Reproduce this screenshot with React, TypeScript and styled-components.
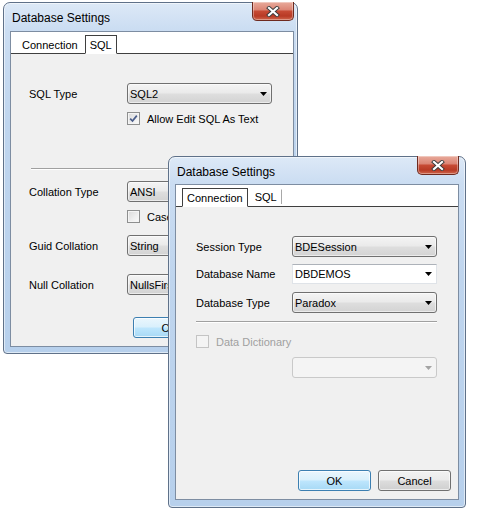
import React from "react";
import styled, { createGlobalStyle } from "styled-components";

const Global = createGlobalStyle`
  html, body { margin: 0; padding: 0; background: #ffffff; }
  body {
    font-family: "Liberation Sans", Arial, sans-serif;
    font-size: 11px;
    color: #000;
  }
`;

const Desktop = styled.div`
  position: relative;
  width: 479px;
  height: 527px;
  overflow: hidden;
  background: #ffffff;
`;

const WindowFrame = styled.div<{
  $x: number;
  $y: number;
  $w: number;
  $h: number;
  $pr: number;
  $pb: number;
}>`
  position: absolute;
  left: ${(p) => p.$x}px;
  top: ${(p) => p.$y}px;
  width: ${(p) => p.$w}px;
  height: ${(p) => p.$h}px;
  box-sizing: border-box;
  border: 1px solid #5f7189;
  border-radius: 7px 7px 4px 4px;
  background: linear-gradient(
    180deg,
    #dde9f7 0px,
    #cbddf2 26px,
    #bfd5ee 120px,
    #b7d0ec 100%
  );
  box-shadow: inset 0 0 0 1px rgba(255, 255, 255, 0.55);
  display: flex;
  flex-direction: column;
  padding: 0 ${(p) => p.$pr}px ${(p) => p.$pb}px 6px;
`;

const TitleBar = styled.div<{ $h: number }>`
  height: ${(p) => p.$h}px;
  flex: none;
  display: flex;
  align-items: flex-start;
  justify-content: space-between;
`;

const TitleText = styled.span`
  margin-top: 8px;
  padding-left: 2px;
  font-size: 12px;
  line-height: 14px;
  color: #000;
`;

const CloseButton = styled.div`
  margin-top: -1px;
  width: 42px;
  height: 19px;
  box-sizing: border-box;
  border: 1px solid #6e2a1f;
  border-top: none;
  border-radius: 0 0 5px 5px;
  background: linear-gradient(
    180deg,
    #e9ab9c 0%,
    #dc8676 42%,
    #c64a34 52%,
    #b83a25 78%,
    #d0674d 100%
  );
  box-shadow: inset 0 0 0 1px rgba(255, 255, 255, 0.35);
  display: flex;
  align-items: center;
  justify-content: center;
`;

const Client = styled.div`
  flex: 1;
  min-height: 0;
  border: 1px solid #7d8da2;
  background: #f0f0f0;
  display: flex;
  flex-direction: column;
`;

const TabStrip = styled.div`
  height: 21px;
  flex: none;
  background: #ffffff;
  border-bottom: 1px solid #3f3f3f;
  display: flex;
  align-items: flex-end;
  gap: 2px;
  padding-left: 6px;
`;

const Tab = styled.div<{ $active?: boolean; $sep?: boolean }>`
  height: ${(p) => (p.$active ? 19 : 18)}px;
  margin-bottom: ${(p) => (p.$active ? -1 : 0)}px;
  box-sizing: border-box;
  padding: 2px 4px 0 4px;
  line-height: 15px;
  border: 1px solid ${(p) => (p.$active ? "#3f3f3f" : "transparent")};
  border-bottom: ${(p) => (p.$active ? "1px solid #ffffff" : "none")};
  border-right-color: ${(p) =>
    p.$active ? "#3f3f3f" : p.$sep ? "#a8a8a8" : "transparent"};
  background: #ffffff;
  ${(p) =>
    p.$sep
      ? "height: 15px; margin-bottom: 2px; padding-top: 0; line-height: 14px;"
      : ""}
`;

const Body = styled.div<{ $pl: number }>`
  flex: 1;
  display: flex;
  flex-direction: column;
  padding: 0 7px 8px ${(p) => p.$pl}px;
`;

const Row = styled.div<{ $mt: number }>`
  display: flex;
  align-items: center;
  margin-top: ${(p) => p.$mt}px;
`;

const Label = styled.span<{ $w: number }>`
  width: ${(p) => p.$w}px;
  flex: none;
  white-space: nowrap;
`;

const Indent = styled.span<{ $w: number }>`
  width: ${(p) => p.$w}px;
  flex: none;
`;

const Combo = styled.div<{ $disabled?: boolean }>`
  width: 145px;
  height: 21px;
  flex: none;
  box-sizing: border-box;
  border: 1px solid ${(p) => (p.$disabled ? "#c9c9c9" : "#707070")};
  border-radius: 3px;
  background: ${(p) =>
    p.$disabled
      ? "#f4f4f4"
      : "linear-gradient(180deg, #f4f4f4 0%, #eaeaea 48%, #dedede 52%, #d3d3d3 100%)"};
  box-shadow: ${(p) =>
    p.$disabled ? "none" : "inset 0 0 0 1px rgba(255,255,255,0.55)"};
  display: flex;
  align-items: center;
  justify-content: space-between;
  padding: 0 4px 0 2px;
  white-space: nowrap;
  overflow: hidden;
`;

const EditCombo = styled.div`
  width: 145px;
  height: 20px;
  flex: none;
  box-sizing: border-box;
  border: 1px solid #dfe3e8;
  border-top-color: #adb2b9;
  background: #ffffff;
  display: flex;
  align-items: center;
  justify-content: space-between;
  padding: 0 4px 0 2px;
`;

const ComboText = styled.span`
  overflow: hidden;
  white-space: nowrap;
`;

const Arrow = ({ color = "#000" }: { color?: string }) => (
  <svg width="7" height="4" viewBox="0 0 7 4">
    <polygon points="0,0 7,0 3.5,4" fill={color} />
  </svg>
);

const CheckBox = styled.div<{ $disabled?: boolean }>`
  width: 13px;
  height: 13px;
  flex: none;
  box-sizing: border-box;
  border: 1px solid ${(p) => (p.$disabled ? "#c4c4c4" : "#8e8f8f")};
  background: ${(p) =>
    p.$disabled
      ? "#f4f4f4"
      : "linear-gradient(135deg, #d9d9d9 0%, #ededed 55%, #fbfbfb 100%)"};
  box-shadow: inset 0 0 0 1px #f4f4f4;
  display: flex;
  align-items: center;
  justify-content: center;
`;

const CheckLabel = styled.span<{ $disabled?: boolean }>`
  margin-left: 7px;
  white-space: nowrap;
  color: ${(p) => (p.$disabled ? "#a0a0a0" : "#000")};
`;

const Separator = styled.div<{ $w: number; $mt: number; $ml?: number }>`
  width: ${(p) => p.$w}px;
  height: 0;
  margin-top: ${(p) => p.$mt}px;
  margin-left: ${(p) => p.$ml ?? 0}px;
  border-top: 1px solid #a0a0a0;
  border-bottom: 1px solid #ffffff;
`;

const ButtonRow = styled.div`
  margin-top: auto;
  display: flex;
  justify-content: flex-end;
  gap: 7px;
`;

const Button = styled.div<{ $default?: boolean }>`
  width: 73px;
  height: 21px;
  box-sizing: border-box;
  border: 1px solid ${(p) => (p.$default ? "#3c7fb1" : "#707070")};
  border-radius: 3px;
  background: ${(p) =>
    p.$default
      ? "linear-gradient(180deg, #eaf6fd 0%, #d9f0fc 48%, #bee6fd 52%, #a7d9f5 100%)"
      : "linear-gradient(180deg, #f2f2f2 0%, #ebebeb 48%, #dddddd 52%, #cfcfcf 100%)"};
  box-shadow: inset 0 0 0 1px
    ${(p) => (p.$default ? "rgba(255,255,255,0.7)" : "rgba(255,255,255,0.6)")};
  display: flex;
  align-items: center;
  justify-content: center;
`;

const CloseX = () => (
  <svg width="14" height="11" viewBox="0 0 14 11">
    <path
      d="M3 2 L11 9 M11 2 L3 9"
      stroke="#3b3b3b"
      strokeWidth="4"
      strokeLinecap="square"
      fill="none"
    />
    <path
      d="M3 2 L11 9 M11 2 L3 9"
      stroke="#ffffff"
      strokeWidth="2.2"
      strokeLinecap="square"
      fill="none"
    />
  </svg>
);

const CheckMark = () => (
  <svg width="9" height="9" viewBox="0 0 9 9">
    <path
      d="M1.2 4.6 L3.5 7 L7.8 1.6"
      stroke="#4a5d8a"
      strokeWidth="1.7"
      fill="none"
    />
  </svg>
);

function Window(props: {
  x: number;
  y: number;
  w: number;
  h: number;
  pr: number;
  pb: number;
  th: number;
  children: React.ReactNode;
}) {
  return (
    <WindowFrame
      $x={props.x}
      $y={props.y}
      $w={props.w}
      $h={props.h}
      $pr={props.pr}
      $pb={props.pb}
    >
      <TitleBar $h={props.th}>
        <TitleText>Database Settings</TitleText>
        <CloseButton>
          <CloseX />
        </CloseButton>
      </TitleBar>
      <Client>{props.children}</Client>
    </WindowFrame>
  );
}

export default function App() {
  return (
    <>
      <Global />
      <Desktop>
        <Window x={3} y={2} w={295} h={352} pr={3} pb={6} th={28}>
          <TabStrip>
            <Tab>Connection</Tab>
            <Tab $active>SQL</Tab>
          </TabStrip>
          <Body $pl={18}>
            <Row $mt={29}>
              <Label $w={98}>SQL Type</Label>
              <Combo>
                <ComboText>SQL2</ComboText>
                <Arrow />
              </Combo>
            </Row>
            <Row $mt={8}>
              <Indent $w={98} />
              <CheckBox>
                <CheckMark />
              </CheckBox>
              <CheckLabel>Allow Edit SQL As Text</CheckLabel>
            </Row>
            <Separator $w={241} $mt={43} $ml={2} />
            <Row $mt={11}>
              <Label $w={98}>Collation Type</Label>
              <Combo>
                <ComboText>ANSI</ComboText>
                <Arrow />
              </Combo>
            </Row>
            <Row $mt={8}>
              <Indent $w={98} />
              <CheckBox />
              <CheckLabel>Case Sensitive</CheckLabel>
            </Row>
            <Row $mt={12}>
              <Label $w={98}>Guid Collation</Label>
              <Combo>
                <ComboText>String</ComboText>
                <Arrow />
              </Combo>
            </Row>
            <Row $mt={18}>
              <Label $w={98}>Null Collation</Label>
              <Combo>
                <ComboText>NullsFirst</ComboText>
                <Arrow />
              </Combo>
            </Row>
            <ButtonRow>
              <Button $default>OK</Button>
              <Button>Cancel</Button>
            </ButtonRow>
          </Body>
        </Window>

        <Window x={168} y={156} w={298} h={352} pr={6} pb={7} th={27}>
          <TabStrip>
            <Tab $active>Connection</Tab>
            <Tab $sep>SQL</Tab>
          </TabStrip>
          <Body $pl={20}>
            <Row $mt={29}>
              <Label $w={96}>Session Type</Label>
              <Combo>
                <ComboText>BDESession</ComboText>
                <Arrow />
              </Combo>
            </Row>
            <Row $mt={7}>
              <Label $w={96}>Database Name</Label>
              <EditCombo>
                <ComboText>DBDEMOS</ComboText>
                <Arrow />
              </EditCombo>
            </Row>
            <Row $mt={8}>
              <Label $w={96}>Database Type</Label>
              <Combo>
                <ComboText>Paradox</ComboText>
                <Arrow />
              </Combo>
            </Row>
            <Separator $w={241} $mt={8} />
            <Row $mt={12}>
              <CheckBox $disabled />
              <CheckLabel $disabled>Data Dictionary</CheckLabel>
            </Row>
            <Row $mt={9}>
              <Indent $w={96} />
              <Combo $disabled>
                <ComboText />
                <Arrow color="#a3a3a3" />
              </Combo>
            </Row>
            <ButtonRow>
              <Button $default>OK</Button>
              <Button>Cancel</Button>
            </ButtonRow>
          </Body>
        </Window>
      </Desktop>
    </>
  );
}
